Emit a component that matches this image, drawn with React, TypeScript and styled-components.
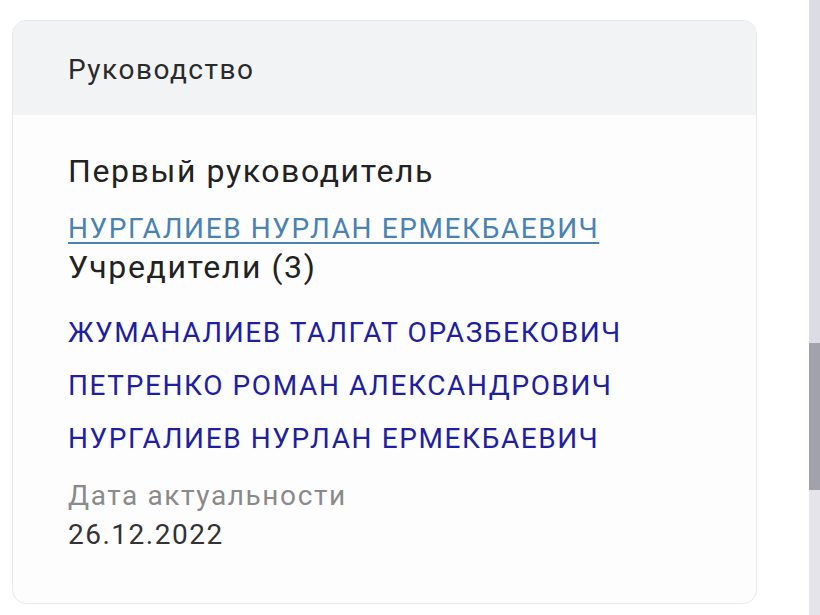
import React from "react";
import styled, { createGlobalStyle } from "styled-components";

const GlobalStyle = createGlobalStyle`
  html, body {
    margin: 0;
    padding: 0;
    background: #ffffff;
  }
  body {
    font-family: Roboto, "Noto Sans", "Liberation Sans", sans-serif;
  }
`;

const Page = styled.div`
  display: flex;
  width: 820px;
  height: 615px;
  overflow: hidden;
  background: #ffffff;
`;

const Main = styled.main`
  flex: 1;
  padding: 20px 0 0 12px;
`;

const Card = styled.section`
  box-sizing: border-box;
  width: 745px;
  height: 584px;
  border: 1px solid #e7e8ea;
  border-radius: 14px;
  overflow: hidden;
  background: #fdfdfd;
`;

const CardHeader = styled.header`
  box-sizing: border-box;
  height: 94px;
  padding: 32px 0 0 55px;
  background: #f2f3f5;
  color: #2a2a2a;
  font-size: 28px;
  line-height: 34px;
  letter-spacing: 1.5px;
`;

const CardBody = styled.div`
  display: flex;
  flex-direction: column;
  align-items: flex-start;
  padding: 36px 55px 0;
  letter-spacing: 1.6px;
`;

const SectionTitle = styled.div<{ $lh: number; $mt?: number }>`
  font-size: 32px;
  line-height: ${(p) => p.$lh}px;
  margin-top: ${(p) => p.$mt ?? 0}px;
  color: #222222;
`;

const LeaderLink = styled.a`
  font-size: 28px;
  line-height: 34px;
  margin-top: 20.5px;
  color: #4a82b2;
  text-decoration: underline;
  text-decoration-thickness: 2px;
  text-underline-offset: 4px;
  cursor: pointer;
`;

const FounderList = styled.ul`
  list-style: none;
  margin: 30.5px 0 0;
  padding: 0;
  display: flex;
  flex-direction: column;
  gap: 17px;
`;

const FounderItem = styled.li`
  font-size: 28px;
  line-height: 36px;
  color: #1f1fa0;
`;

const MetaLabel = styled.div`
  margin-top: 22px;
  font-size: 28px;
  line-height: 34px;
  color: #8a8a8a;
`;

const MetaValue = styled.div`
  margin-top: 5px;
  font-size: 28px;
  line-height: 34px;
  letter-spacing: 1.5px;
  color: #333333;
`;

const Scrollbar = styled.div`
  width: 11px;
  height: 615px;
  display: flex;
  flex-direction: column;
`;

const Track = styled.div<{ $h: number; $c: string }>`
  height: ${(p) => p.$h}px;
  background: ${(p) => p.$c};
`;

const founders = [
  "ЖУМАНАЛИЕВ ТАЛГАТ ОРАЗБЕКОВИЧ",
  "ПЕТРЕНКО РОМАН АЛЕКСАНДРОВИЧ",
  "НУРГАЛИЕВ НУРЛАН ЕРМЕКБАЕВИЧ",
];

export default function App() {
  return (
    <>
      <GlobalStyle />
      <Page>
        <Main>
          <Card>
            <CardHeader>Руководство</CardHeader>
            <CardBody>
              <SectionTitle $lh={40}>Первый руководитель</SectionTitle>
              <LeaderLink>НУРГАЛИЕВ НУРЛАН ЕРМЕКБАЕВИЧ</LeaderLink>
              <SectionTitle $lh={34} $mt={4.5}>
                Учредители (3)
              </SectionTitle>
              <FounderList>
                {founders.map((f) => (
                  <FounderItem key={f}>{f}</FounderItem>
                ))}
              </FounderList>
              <MetaLabel>Дата актуальности</MetaLabel>
              <MetaValue>26.12.2022</MetaValue>
            </CardBody>
          </Card>
        </Main>
        <Scrollbar>
          <Track $h={343} $c="#dcdce4" />
          <Track $h={147} $c="#a2a2ac" />
          <Track $h={125} $c="#e4e4ea" />
        </Scrollbar>
      </Page>
    </>
  );
}
